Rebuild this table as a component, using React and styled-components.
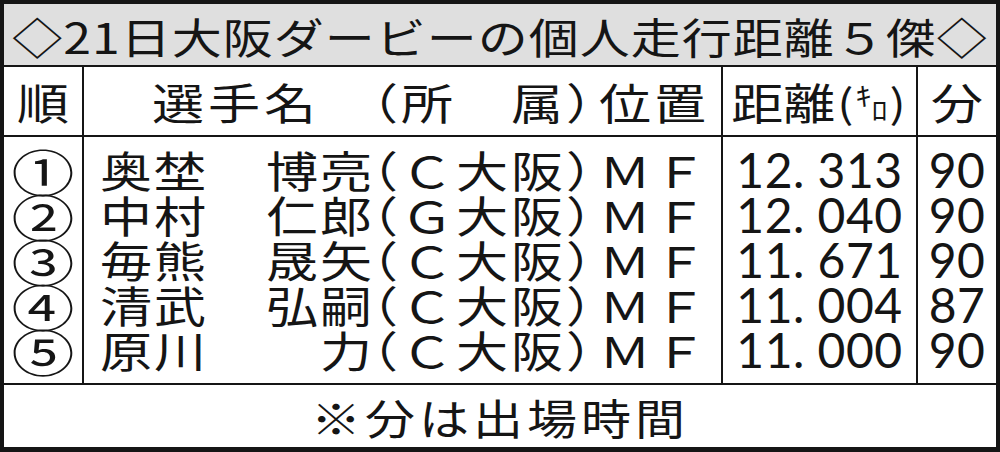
import React from 'react';
import styled, { createGlobalStyle } from 'styled-components';

const INK = '#151515';

const GlobalStyle = createGlobalStyle`
  html, body {
    margin: 0;
    padding: 0;
    background: #ffffff;
  }
  body {
    font-family: "Noto Sans CJK JP", "Noto Sans", sans-serif;
    color: ${INK};
  }
  * {
    box-sizing: border-box;
  }
`;

const Frame = styled.div`
  width: 1000px;
  height: 452px;
  border: 4px solid ${INK};
  border-bottom-width: 5px;
  display: flex;
  flex-direction: column;
  background: #ffffff;
`;

const Title = styled.div`
  height: 63px;
  border-bottom: 2px solid ${INK};
  background: #dfdfdf;
  display: flex;
  align-items: center;
  justify-content: center;
  font-size: 50px;
  line-height: 56px;
  letter-spacing: 1px;
  white-space: nowrap;
`;

// 平体: newspaper type is squashed vertically
const Flat = styled.span`
  display: inline-block;
  transform: scaleY(${(p) => p.$ratio || 0.82});
  white-space: nowrap;
`;

const Row = styled.div`
  display: grid;
  grid-template-columns: 80px 639px 195px 78px;
  height: ${(p) => p.$height}px;
  border-bottom: 2px solid ${INK};
`;

const Cell = styled.div`
  border-right: 2px solid ${INK};
  display: flex;
  flex-direction: column;
  justify-content: center;
  padding: ${(p) => p.$pad || '0'};

  &:last-child {
    border-right: none;
  }
`;

const Line = styled.div`
  height: ${(p) => p.$h || 45}px;
  display: flex;
  align-items: center;
  justify-content: ${(p) => p.$justify || 'center'};
  padding-left: ${(p) => p.$indent || 0}px;
  font-size: ${(p) => p.$size || 52}px;
  line-height: 45px;
  white-space: nowrap;
`;

const Person = styled.span`
  width: 272px;
  display: flex;
  justify-content: ${(p) => (p.$center ? 'center' : 'space-between')};
  letter-spacing: ${(p) => (p.$center ? 4 : 2)}px;
`;

const Given = styled.span`
  margin-right: -2px;
`;

const Club = styled.span`
  font-feature-settings: "halt";
  letter-spacing: 3px;
`;

const Pos = styled.span`
  margin-left: 4px;
  letter-spacing: 3px;
`;

const Digits = styled.span`
  font-family: "Lato", "Noto Sans", sans-serif;
  font-size: 48px;
  letter-spacing: 0.5px;
`;

const Unit = styled.span`
  display: inline-flex;
  align-items: center;
`;

const Paren = styled.span`
  font-size: 48px;
  margin: 0 2px;
`;

const Tiny = styled.span`
  font-size: 32px;
  line-height: 32px;
  position: relative;
  top: ${(p) => p.$top}px;
`;

const Footer = styled.div`
  flex: 1;
  display: flex;
  align-items: center;
  justify-content: center;
  font-size: 50px;
  line-height: 56px;
  letter-spacing: 4px;
`;

const rows = [
  { rank: '①', sur: '奥埜', given: '博亮', club: 'Ｃ大阪', dist: '12. 313', min: '90' },
  { rank: '②', sur: '中村', given: '仁郎', club: 'Ｇ大阪', dist: '12. 040', min: '90' },
  { rank: '③', sur: '毎熊', given: '晟矢', club: 'Ｃ大阪', dist: '11. 671', min: '90' },
  { rank: '④', sur: '清武', given: '弘嗣', club: 'Ｃ大阪', dist: '11. 004', min: '87' },
  { rank: '⑤', sur: '原川', given: '力', club: 'Ｃ大阪', dist: '11. 000', min: '90' },
];

const App = () => {
  return (
    <>
      <GlobalStyle />
      <Frame>
        <Title>
          <Flat $ratio={0.85}>◇21日大阪ダービーの個人走行距離５傑◇</Flat>
        </Title>

        <Row $height={70}>
          <Cell>
            <Line $h={68}>
              <Flat>順</Flat>
            </Line>
          </Cell>
          <Cell>
            <Line $h={68} $justify="flex-start" $indent={16}>
              <Flat>
                <Unit>
                  <Person $center>選手名</Person>
                  <Club>（所　属）</Club>
                  <Pos>位置</Pos>
                </Unit>
              </Flat>
            </Line>
          </Cell>
          <Cell>
            <Line $h={68}>
              <Flat>
                <Unit>
                  距離
                  <Paren>(</Paren>
                  <Tiny $top={-9}>ｷ</Tiny>
                  <Tiny $top={8}>ﾛ</Tiny>
                  <Paren>)</Paren>
                </Unit>
              </Flat>
            </Line>
          </Cell>
          <Cell>
            <Line $h={68}>
              <Flat>分</Flat>
            </Line>
          </Cell>
        </Row>

        <Row $height={248}>
          <Cell $pad="10px 0 11px">
            {rows.map((r) => (
              <Line key={r.rank} $size={63}>
                <Flat $ratio={0.8}>{r.rank}</Flat>
              </Line>
            ))}
          </Cell>
          <Cell $pad="10px 0 11px">
            {rows.map((r) => (
              <Line key={r.rank} $justify="flex-start" $indent={16}>
                <Flat>
                  <Unit>
                    <Person>
                      <span>{r.sur}</span>
                      <Given>{r.given}</Given>
                    </Person>
                    <Club>（{r.club}）</Club>
                    <Pos>ＭＦ</Pos>
                  </Unit>
                </Flat>
              </Line>
            ))}
          </Cell>
          <Cell $pad="10px 0 11px">
            {rows.map((r) => (
              <Line key={r.rank}>
                <Digits>{r.dist}</Digits>
              </Line>
            ))}
          </Cell>
          <Cell $pad="10px 0 11px">
            {rows.map((r) => (
              <Line key={r.rank}>
                <Digits>{r.min}</Digits>
              </Line>
            ))}
          </Cell>
        </Row>

        <Footer>
          <Flat $ratio={0.85}>※分は出場時間</Flat>
        </Footer>
      </Frame>
    </>
  );
};

export default App;
